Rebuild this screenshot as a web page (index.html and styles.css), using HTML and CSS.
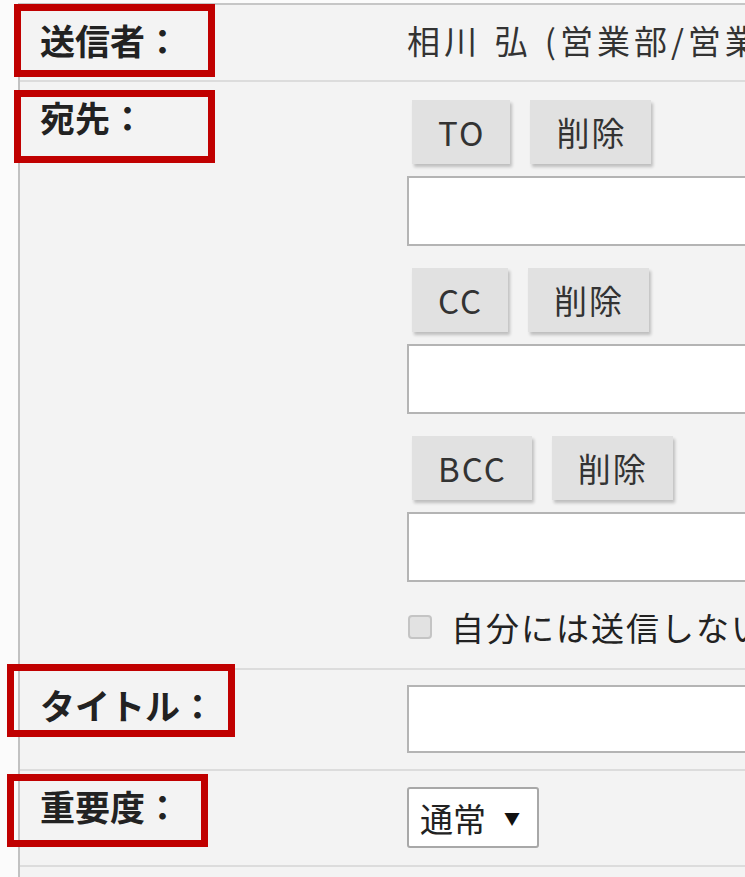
FILE: index.html
```html
<!DOCTYPE html>
<html lang="ja">
<head>
    <meta charset="UTF-8">
    <title>メール作成</title>
    <link rel="stylesheet" href="styles.css">
</head>
<body>
    <div class="mail-form">
        <!-- 送信者 -->
        <div class="row row-sender">
            <div class="label">
                送信者：
                <span class="mark mark-sender"></span>
            </div>
            <div class="field">
                <span class="sender-name">相川 弘 (営業部/営業部長)</span>
            </div>
        </div>

        <!-- 宛先 -->
        <div class="row row-dest">
            <div class="label">
                宛先：
                <span class="mark mark-dest"></span>
            </div>
            <div class="field">
                <div class="dest-group">
                    <div class="btn-line">
                        <span class="btn">TO</span>
                        <span class="btn">削除</span>
                    </div>
                    <div class="text-box"></div>
                </div>
                <div class="dest-group">
                    <div class="btn-line">
                        <span class="btn">CC</span>
                        <span class="btn">削除</span>
                    </div>
                    <div class="text-box"></div>
                </div>
                <div class="dest-group">
                    <div class="btn-line">
                        <span class="btn">BCC</span>
                        <span class="btn">削除</span>
                    </div>
                    <div class="text-box"></div>
                </div>
                <div class="check-line">
                    <span class="check"></span>
                    <span>自分には送信しない</span>
                </div>
            </div>
        </div>

        <!-- タイトル -->
        <div class="row row-title">
            <div class="label">
                タイトル：
                <span class="mark mark-title"></span>
            </div>
            <div class="field">
                <div class="text-box title-box"></div>
            </div>
        </div>

        <!-- 重要度 -->
        <div class="row row-priority">
            <div class="label">
                重要度：
                <span class="mark mark-priority"></span>
            </div>
            <div class="field">
                <div class="select">通常 <span class="arrow">▼</span></div>
            </div>
        </div>
    </div>
</body>
</html>
```

FILE: styles.css
```css
:root {
    --bg-form: #f3f3f3;
    --line: #dcdcdc;
    --mark-red: #c00000;
    --text: #333333;
}

body {
    margin: 0;
    background: #fbfbfb;
    overflow: hidden;
    font-family: "Noto Sans CJK JP", "Noto Sans", sans-serif;
    color: var(--text);
}

.mail-form {
    width: 1000px;
    margin: 3px 0 0 18px;
    background: var(--bg-form);
    border-top: 2px solid #c6c6c6;
    border-left: 2px solid #c2c2c2;
    padding-bottom: 10px;
}

.row {
    display: grid;
    grid-template-columns: 387px 1fr;
    border-bottom: 2px solid var(--line);
}

/* 左側ラベル */
.label {
    position: relative;
    padding: 10px 0 0 20px;
    font-size: 35px;
    font-weight: bold;
    line-height: 50px;
    color: #222;
    white-space: nowrap;
}

/* 赤枠の注釈 */
.mark {
    position: absolute;
    width: 201px;
    height: 73px;
    border: 7px solid var(--mark-red);
    box-sizing: border-box;
    left: -6px;
}

.mark-sender { top: -1px; }
.mark-dest { top: 8px; }
.mark-title { top: -6px; left: -13px; width: 228px; }
.mark-priority { top: 3px; left: -13px; }

/* 右側 */
.field {
    font-size: 33px;
    letter-spacing: 2px;
    line-height: 50px;
}

.row-sender .field {
    padding: 10px 0 15px;
    white-space: nowrap;
    letter-spacing: 4px;
    word-spacing: 2px;
}

.row-dest .field {
    padding: 18px 0 16px;
}

.dest-group {
    margin-bottom: 22px;
}

.btn-line {
    display: flex;
    gap: 20px;
    margin-bottom: 12px;
    padding-left: 5px;
}

.btn {
    height: 64px;
    line-height: 64px;
    padding: 0 25px 0 26px;
    background: #e1e1e1;
    box-shadow: 2px 3px 3px rgba(0, 0, 0, 0.22);
    color: #333;
}

.text-box {
    height: 70px;
    background: #fff;
    border: 2px solid #b4b4b4;
    box-sizing: border-box;
}

.check-line {
    display: flex;
    align-items: center;
    gap: 19px;
    margin-top: -2px;
    padding-left: 1px;
    color: #222;
    white-space: nowrap;
}

.check {
    flex-shrink: 0;
    width: 24px;
    height: 24px;
    box-sizing: border-box;
    border: 2px solid #c4c4c4;
    border-radius: 4px;
    background: #e2e2e2;
}

.row-title .field {
    padding: 15px 0 16px;
}

.title-box {
    height: 68px;
}

.row-priority .field {
    padding: 16px 0 17px;
}

.select {
    display: inline-flex;
    align-items: center;
    gap: 18px;
    height: 61px;
    box-sizing: border-box;
    padding: 0 17px 0 11px;
    background: #fff;
    border: 2px solid #a8a8a8;
    border-radius: 3px;
    color: #222;
    letter-spacing: 0;
}

.arrow {
    font-size: 16px;
    color: #111;
}
```
